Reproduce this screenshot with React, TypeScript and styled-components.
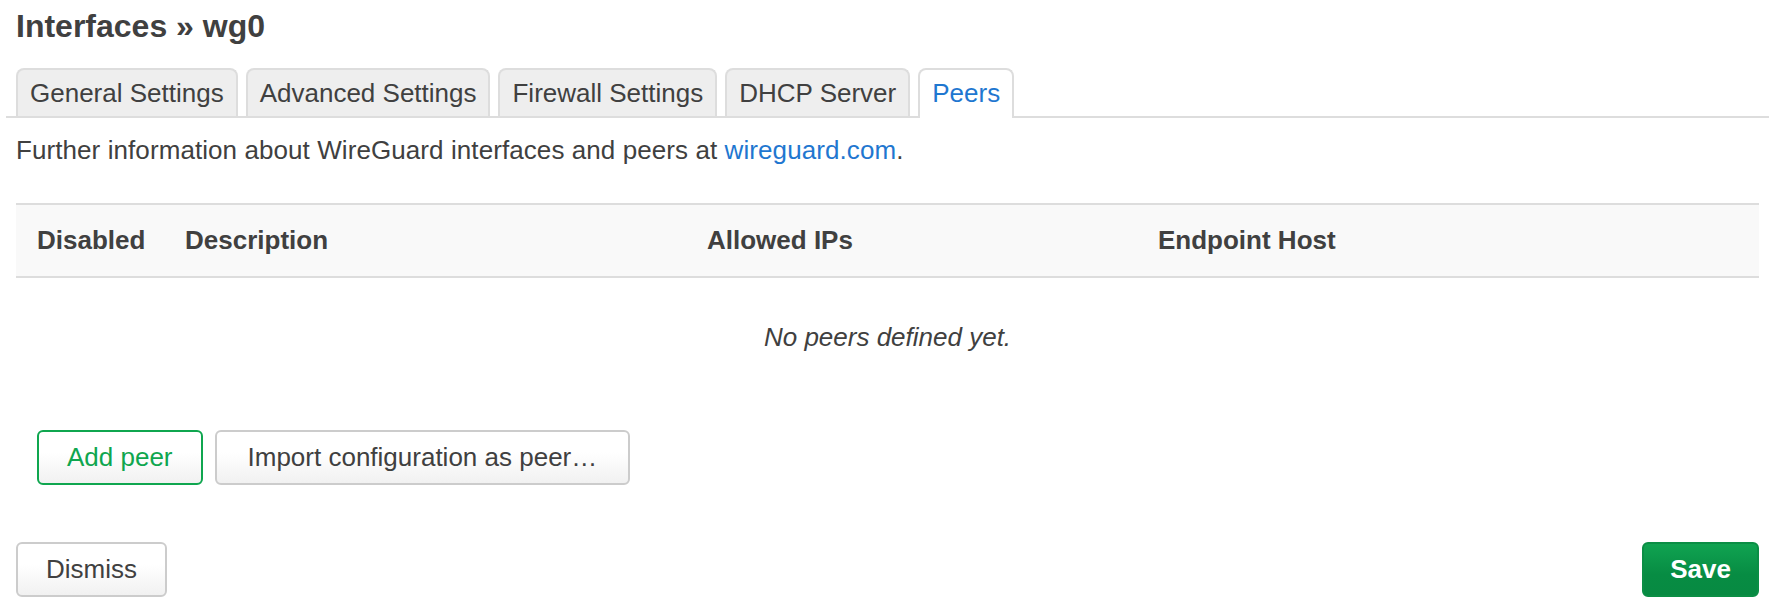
import React from "react";
import styled, { createGlobalStyle, css } from "styled-components";

const GlobalStyle = createGlobalStyle`
  html, body {
    margin: 0;
    padding: 0;
    background: #ffffff;
  }
  body {
    font-family: "Liberation Sans", Arial, Helvetica, sans-serif;
    font-size: 26px;
    color: #404040;
  }
  * { box-sizing: border-box; }
`;

const Page = styled.div`
  width: 1776px;
  padding: 0 7px 0 6px;
`;

const Title = styled.h2`
  margin: 6px 0 0 10px;
  font-size: 32px;
  line-height: 40px;
  font-weight: bold;
  color: #404040;
`;

const TabBar = styled.ul`
  display: flex;
  align-items: flex-end;
  gap: 8px;
  list-style: none;
  margin: 22px 0 0;
  padding: 0 0 0 10px;
  border-bottom: 2px solid #dddddd;
`;

const Tab = styled.li<{ $active?: boolean }>`
  height: 48px;
  padding: 0 12px;
  line-height: 46px;
  border: 2px solid #dddddd;
  border-bottom: none;
  border-radius: 8px 8px 0 0;
  background: #eeeeee;
  color: #404040;
  white-space: nowrap;
  ${(p) =>
    p.$active &&
    css`
      height: 50px;
      margin-bottom: -2px;
      background: #ffffff;
      color: #1f77d0;
    `}
`;

const Content = styled.div`
  padding: 0 10px;
`;

const Description = styled.p`
  margin: 14px 0 35px;
  line-height: 36px;
  letter-spacing: 0.08px;
`;

const Link = styled.a`
  color: #1f77d0;
  text-decoration: none;
`;

const Table = styled.table`
  width: 100%;
  table-layout: fixed;
  border-collapse: separate;
  border-spacing: 0;
`;

const Th = styled.th`
  text-align: left;
  font-weight: bold;
  padding: 20px 0 21px 21px;
  line-height: 30px;
  background: #f9f9f9;
  border-top: 2px solid #dddddd;
  border-bottom: 2px solid #dddddd;
  white-space: nowrap;
`;

const EmptyCell = styled.td`
  padding: 44px 0 45px;
  line-height: 30px;
  text-align: center;
  font-style: italic;
`;

const ButtonRow = styled.div`
  display: flex;
  gap: 12px;
  margin-top: 33px;
  padding-left: 21px;
`;

const Footer = styled.div`
  display: flex;
  justify-content: space-between;
  margin-top: 57px;
`;

type Variant = "default" | "positive" | "save";

const Button = styled.button<{ $variant?: Variant; $wide?: boolean }>`
  height: 55px;
  padding: 0 ${(p) => (p.$wide ? 31 : 28)}px;
  font-family: inherit;
  font-size: 26px;
  line-height: 51px;
  border-radius: 6px;
  border: 2px solid #cccccc;
  color: #404040;
  background: linear-gradient(#ffffff, #ffffff 40%, #f1f1f1);
  cursor: pointer;
  white-space: nowrap;
  ${(p) =>
    p.$variant === "positive" &&
    css`
      border-color: #0fa64f;
      color: #0fa64f;
    `}
  ${(p) =>
    p.$variant === "save" &&
    css`
      padding: 0 26px;
      border-color: #0b8e45;
      color: #ffffff;
      font-weight: bold;
      background: linear-gradient(#10a351, #078c43 60%, #078a42);
    `}
`;

const tabs = [
  "General Settings",
  "Advanced Settings",
  "Firewall Settings",
  "DHCP Server",
  "Peers",
];

export default function App() {
  return (
    <>
      <GlobalStyle />
      <Page>
        <Title>Interfaces » wg0</Title>
        <TabBar>
          {tabs.map((t) => (
            <Tab key={t} $active={t === "Peers"}>
              {t}
            </Tab>
          ))}
        </TabBar>
        <Content>
          <Description>
            Further information about WireGuard interfaces and peers at{" "}
            <Link href="#">wireguard.com</Link>.
          </Description>
          <Table>
            <colgroup>
              <col style={{ width: 148 }} />
              <col style={{ width: 522 }} />
              <col style={{ width: 451 }} />
              <col />
            </colgroup>
            <thead>
              <tr>
                <Th>Disabled</Th>
                <Th>Description</Th>
                <Th>Allowed IPs</Th>
                <Th>Endpoint Host</Th>
              </tr>
            </thead>
            <tbody>
              <tr>
                <EmptyCell colSpan={4}>No peers defined yet.</EmptyCell>
              </tr>
            </tbody>
          </Table>
          <ButtonRow>
            <Button $variant="positive">Add peer</Button>
            <Button $wide>Import configuration as peer…</Button>
          </ButtonRow>
          <Footer>
            <Button>Dismiss</Button>
            <Button $variant="save">Save</Button>
          </Footer>
        </Content>
      </Page>
    </>
  );
}
